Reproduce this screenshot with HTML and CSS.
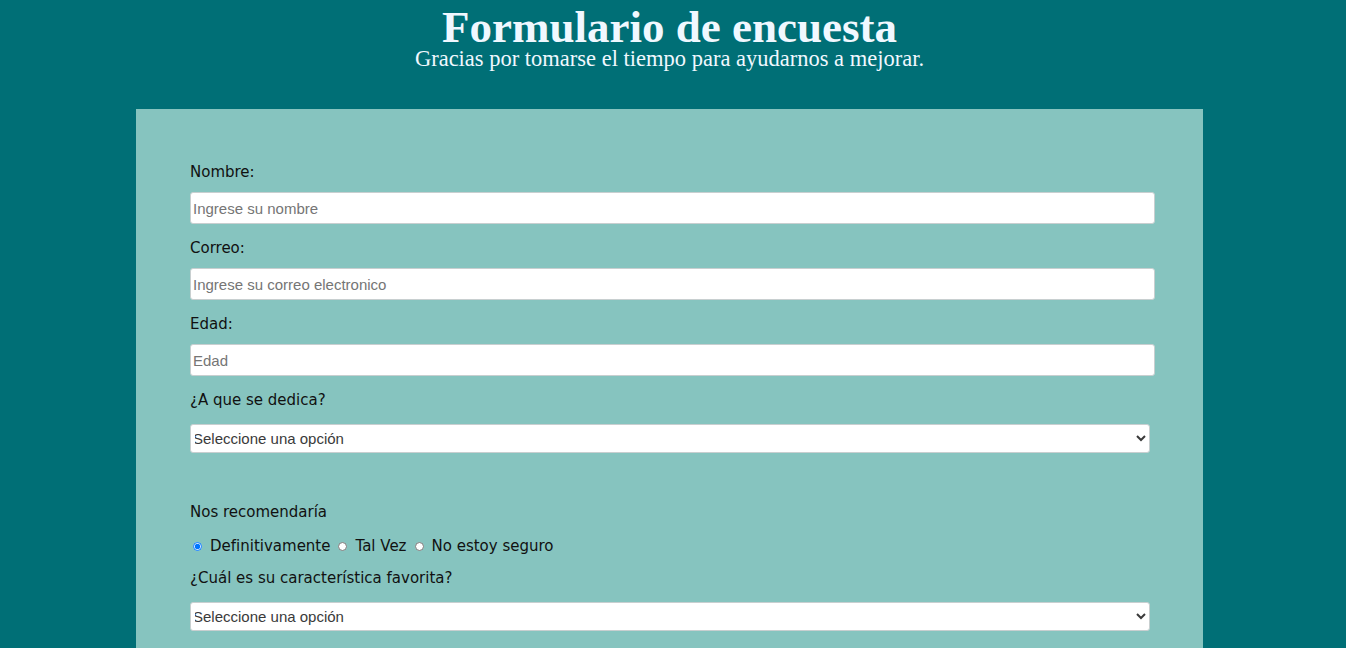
FILE: index.html
```html
<!DOCTYPE html>
<html lang="es">
<head>
<meta charset="utf-8">
<title>Formulario de encuesta</title>
<link rel="stylesheet" href="styles.css">
</head>
<body>
<div class="page">
  <header class="header">
    <h1 class="title">Formulario de encuesta</h1>
    <p class="subtitle">Gracias por tomarse el tiempo para ayudarnos a mejorar.</p>
  </header>
  <form class="survey">
    <div class="group">
      <label class="label" for="name">Nombre:</label>
      <input class="field" id="name" type="text" placeholder="Ingrese su nombre">
    </div>
    <div class="group">
      <label class="label" for="email">Correo:</label>
      <input class="field" id="email" type="email" placeholder="Ingrese su correo electronico">
    </div>
    <div class="group">
      <label class="label" for="age">Edad:</label>
      <input class="field" id="age" type="number" placeholder="Edad">
    </div>
    <div class="group group-select">
      <label class="label" for="role">¿A que se dedica?</label>
      <select class="dropdown" id="role">
        <option>Seleccione una opción</option>
      </select>
    </div>
    <div class="group group-radio">
      <p class="label">Nos recomendaría</p>
      <div class="radios">
        <label class="radio-item"><input class="radio" type="radio" name="rec" checked>Definitivamente</label>
        <label class="radio-item"><input class="radio" type="radio" name="rec">Tal Vez</label>
        <label class="radio-item"><input class="radio" type="radio" name="rec">No estoy seguro</label>
      </div>
    </div>
    <div class="group">
      <label class="label" for="fav">¿Cuál es su característica favorita?</label>
      <select class="dropdown" id="fav">
        <option>Seleccione una opción</option>
      </select>
    </div>
  </form>
</div>
</body>
</html>
```

FILE: styles.css
```css
html, body {
  margin: 0;
  padding: 0;
  background: #006f76;
}

.page {
  width: 1339px;
  display: flex;
  flex-direction: column;
  align-items: center;
}

.header {
  padding-top: 7px;
  text-align: center;
  color: #f0f8ff;
  font-family: "Liberation Serif", "Times New Roman", serif;
}

.title {
  margin: 0;
  font-size: 45px;
  font-weight: bold;
  line-height: 40px;
}

.subtitle {
  margin: 0;
  font-size: 22.5px;
  line-height: 24px;
}

.survey {
  margin-top: 38px;
  width: 1067px;
  box-sizing: border-box;
  padding: 54px 54px 40px;
  background: #86c4bf;
  font-family: "DejaVu Sans", Verdana, sans-serif;
  font-size: 15px;
  color: #111;
  min-height: 560px;
}

.group {
  display: flex;
  flex-direction: column;
  align-items: flex-start;
  margin-bottom: 15px;
}

.label {
  display: block;
  margin: 0 0 10px;
  line-height: 19px;
}

.field {
  width: 965px;
  height: 32px;
  box-sizing: border-box;
  margin: 0;
  padding: 0 2px;
  border: 1px solid #c8cfd0;
  border-radius: 3px;
  background: #fff;
  font-family: "Liberation Sans", Arial, sans-serif;
  font-size: 15px;
  color: #222;
}

.field::placeholder {
  color: #757575;
}

.field::-webkit-outer-spin-button,
.field::-webkit-inner-spin-button {
  -webkit-appearance: none;
  margin: 0;
}

.dropdown {
  width: 960px;
  height: 29px;
  box-sizing: border-box;
  margin: 4px 0 0;
  padding: 0;
  text-indent: -2px;
  border: 1px solid #c8cfd0;
  border-radius: 3px;
  background: #fff;
  font-family: "Liberation Sans", Arial, sans-serif;
  font-size: 15px;
  color: #3a3a3a;
}

.group-select {
  margin-bottom: 50px;
}

.group-radio .label {
  margin-bottom: 15px;
}

.group-radio {
  margin-bottom: 14px;
}

.radios {
  display: flex;
  align-items: center;
  line-height: 18px;
}

.radio-item {
  display: flex;
  align-items: center;
  margin-right: 5px;
}

.radio {
  width: 9px;
  height: 9px;
  margin: 1px 8px 0 3px;
}
```
